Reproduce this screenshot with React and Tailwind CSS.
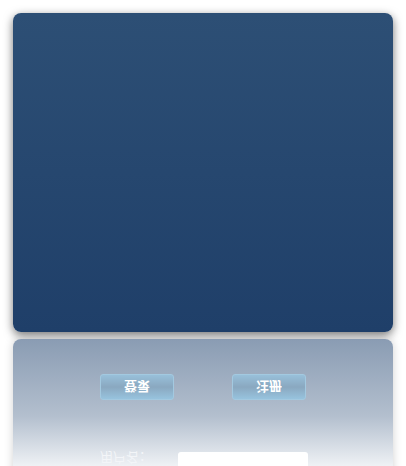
export default function App() {
  return (
    <div className="w-[406px] h-[466px] bg-white overflow-hidden pt-[13px] px-[13px] font-['Noto_Sans_CJK_SC',sans-serif]">
      <div className="h-[319px] rounded-[8px] bg-gradient-to-b from-[#2d4f75] to-[#1f3f69] shadow-[0_3px_10px_rgba(0,0,0,0.55)]" />

      <div className="mt-[7px] h-[140px] rounded-t-[8px] overflow-hidden bg-gradient-to-b from-[#8a9cb3] via-[#b3bfce] via-55% to-white shadow-[0_0_10px_rgba(0,0,0,0.18)]">
        <div className="flex pt-[35px] pl-[87px] gap-[58px]">
          <div className="w-[74px] h-[26px] rounded-[3px] border border-[#a3c9e0] bg-gradient-to-b from-[#98c0da] via-[#8aa8c0] to-[#97c3de] flex items-center justify-center">
            <span className="-scale-y-100 text-white text-[13px] font-bold leading-none">登录</span>
          </div>
          <div className="w-[74px] h-[26px] rounded-[3px] border border-[#a3c9e0] bg-gradient-to-b from-[#98c0da] via-[#8aa8c0] to-[#97c3de] flex items-center justify-center">
            <span className="-scale-y-100 text-white text-[13px] font-bold leading-none">注册</span>
          </div>
        </div>
        <div className="flex mt-[52px] pl-[87px] items-start">
          <span className="w-[78px] -scale-y-100 text-[13px] text-[#f3f5f8] leading-none">用户名：</span>
          <div className="w-[130px] h-[20px] rounded-[3px] bg-white" />
        </div>
      </div>
    </div>
  )
}
